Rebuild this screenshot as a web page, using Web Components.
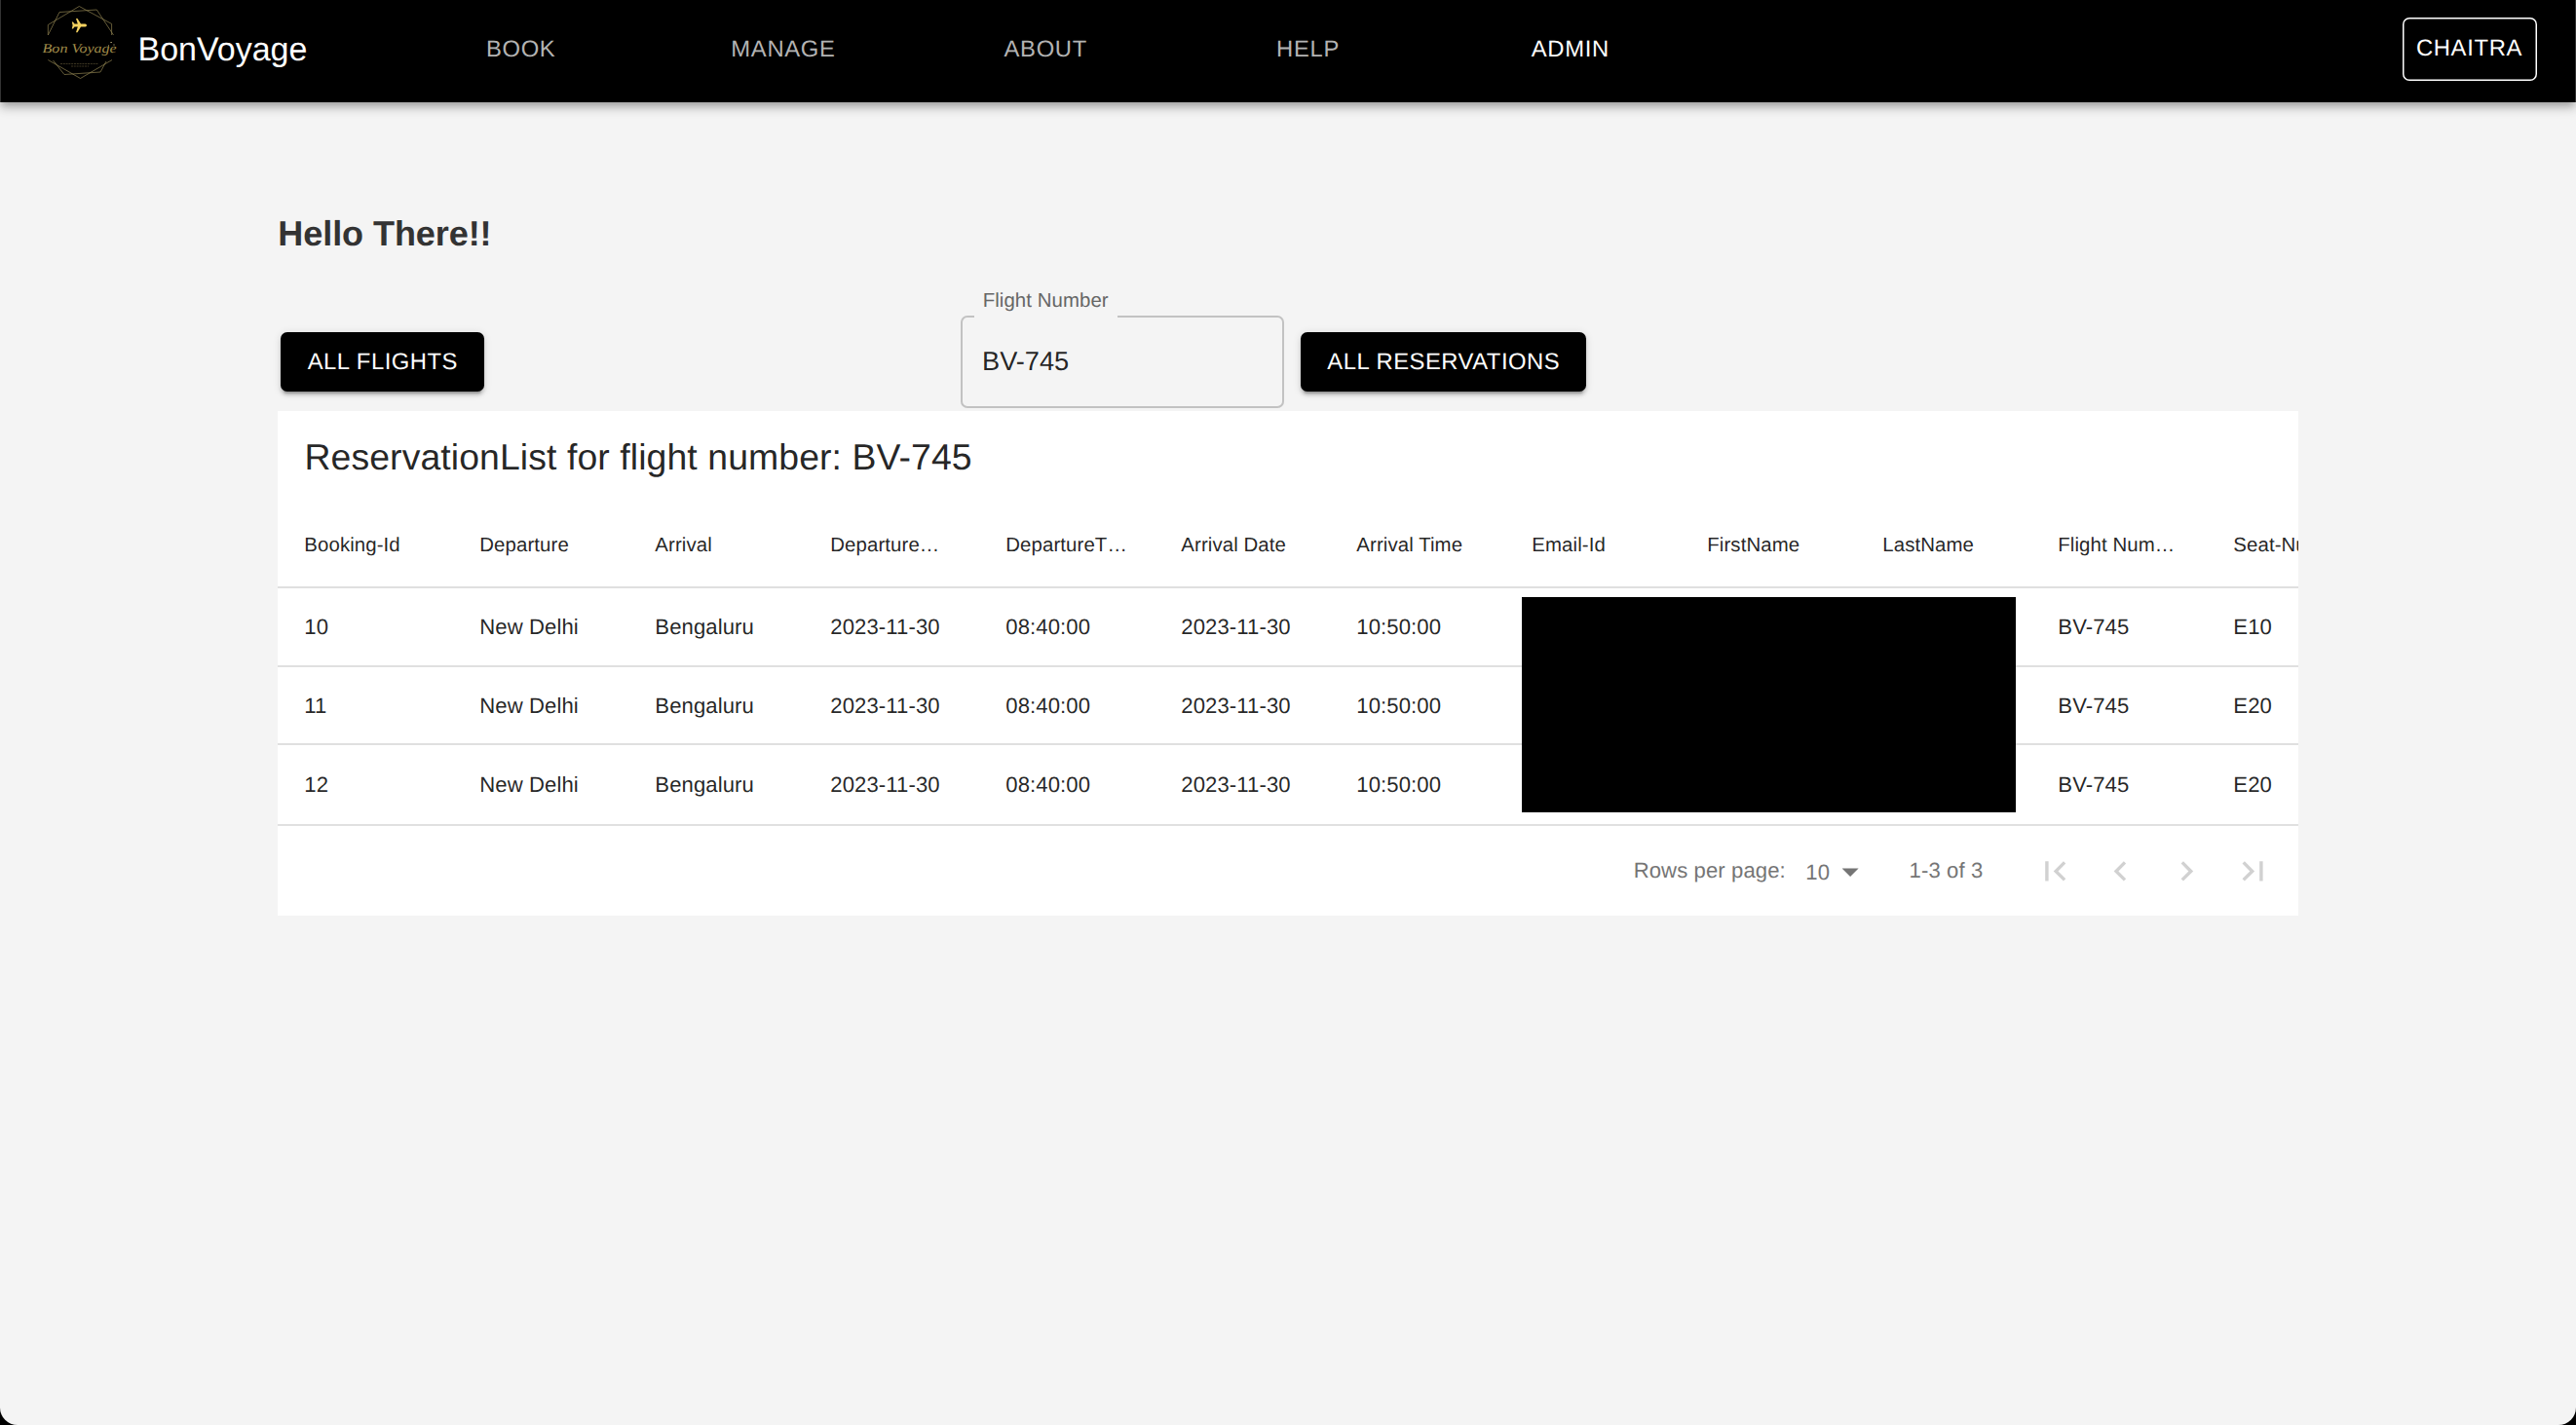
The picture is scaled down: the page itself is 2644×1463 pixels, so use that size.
<!DOCTYPE html>
<html lang="en">
<head>
<meta charset="utf-8">
<title>BonVoyage</title>
<style>
html,body{margin:0;padding:0;background:#000;height:100%;overflow:hidden}
body{font-family:"Liberation Sans",Arial,sans-serif;color:rgba(0,0,0,.87);text-rendering:geometricPrecision}
</style>
</head>
<body>
<bv-app></bv-app>
<script>
function define(name, css, html, setup) {
  customElements.define(name, class extends HTMLElement {
    constructor() {
      super();
      const root = this.attachShadow({mode: 'open'});
      root.innerHTML = '<style>*{box-sizing:border-box}' + css + '</style>' + html;
    }
    connectedCallback() { if (setup) setup(this, this.shadowRoot); }
  });
}

define('bv-logo', `:host{display:block;width:92px;height:88px;flex:none}svg{display:block}`, `
<svg width="92" height="88" viewBox="36 0 92 88" fill="none" stroke="#8f8250" stroke-width=".7">
  <path d="M49.3 36V25.500L81.300 6.500 114.600 24.500V36M49.300 36L61 12.500 99.300 10 116.500 36M49.300 61.500L82.500 80.500 115 61.500M54.500 62L66 76.500 103 74 109 63"/>
  <path fill="#f5d260" stroke="none" d="M89 26c0-1-1-1.500-2.500-1.500H83l-3.500-5.500h-1.500l1.800 5.500h-3.300L75 22.500h-1.200l.8 3.500-.8 3.500H75l1.500-2h3.300L78 33.300h1.500L83 27.500h3.500C88 27.500 89 27 89 26z"/>
  <g fill="#a08c4a" stroke="none" font-family="Liberation Serif,serif" font-style="italic" font-size="13.500">
    <text x="43.500" y="53.500" textLength="26" lengthAdjust="spacingAndGlyphs">Bon</text>
    <text x="73.500" y="53.500" textLength="46" lengthAdjust="spacingAndGlyphs">Voyage</text>
  </g>
  <path stroke="#3c3622" stroke-width="1" stroke-dasharray="2 .8" d="M62 65.500H101M73 68H91"/>
  <path stroke="#d8c890" stroke-width="1.200" d="M113.500 43.500h1.200M111 47h1M116.500 46h1"/>
</svg>`);

define('bv-nav-item', `:host{display:flex;justify-content:center;width:269.3px;font-size:23.8px;line-height:28px;letter-spacing:.68px;color:#b3b3b3}:host([active]){color:#fff}`, `<slot></slot>`);

define('bv-header', `
:host{display:flex;align-items:flex-start;height:104.5px;background:#000;border-left:1px solid #333;border-right:1px solid #333;box-shadow:0 3.4px 6.8px -1.7px rgba(0,0,0,.2),0 6.8px 8.5px rgba(0,0,0,.14),0 1.7px 17px rgba(0,0,0,.12);padding-left:35px;padding-right:39.5px}
.brand{font-size:34px;line-height:40px;color:#fff;margin:30.500px 0 0 13.500px;width:258.5px}
nav{display:flex;margin-top:37px}
.user{margin-left:auto;margin-top:18px;width:138px;height:64.5px;box-shadow:inset 0 0 0 1.500px #fff;border-radius:7px;color:#fff;font-size:23.8px;letter-spacing:.68px;display:flex;align-items:center;justify-content:center}
`, `<bv-logo></bv-logo><div class="brand">BonVoyage</div>
<nav><bv-nav-item>BOOK</bv-nav-item><bv-nav-item>MANAGE</bv-nav-item><bv-nav-item>ABOUT</bv-nav-item><bv-nav-item>HELP</bv-nav-item><bv-nav-item active>ADMIN</bv-nav-item></nav>
<div class="user">CHAITRA</div>`);

define('bv-button', `:host{display:flex;align-items:center;justify-content:center;flex:none;height:61.2px;padding-top:1px;box-sizing:border-box;background:#000;color:#fff;border-radius:6.8px;font-size:23.8px;letter-spacing:.52px;box-shadow:0 5px 1.700px -3.4px rgba(0,0,0,.2),0 3.4px 3.4px rgba(0,0,0,.14),0 1.7px 8.5px rgba(0,0,0,.12)}`, `<slot></slot>`);

define('bv-field', `
:host{display:block;width:332.7px;flex:none}
fieldset{margin:0;height:105px;padding:0 0 0 12.600px;border:2px solid #c2c2c2;border-radius:6.8px;min-width:0}
legend{height:23px;padding:0 8.5px;line-height:23px;font-size:20.4px;color:#666;width:146.700px;white-space:nowrap;letter-spacing:.08px}
.label{display:block;margin-top:-16px}
.v{padding-left:7.900px;font-size:27.2px;line-height:32px;margin-top:18.500px}
`, `<fieldset><legend><span class="label"><slot name="label"></slot></span></legend><div class="v"><slot></slot></div></fieldset>`);

define('bv-toolbar', `
:host{display:flex;height:126px;padding-left:3.2px;align-items:flex-start}
.a{width:208.700px;margin-top:45.500px}.f{margin:18px 17px 0 488.400px}.b{width:293px;margin-top:45.500px}
`, `<bv-button class="a">ALL FLIGHTS</bv-button><bv-field class="f"><span slot="label">Flight Number</span>BV-745</bv-field><bv-button class="b">ALL RESERVATIONS</bv-button>`);

define('bv-row', `
:host{display:flex;align-items:center;box-sizing:border-box;border-bottom:2px solid #e0e0e0;font-size:22.1px;letter-spacing:.1px;width:2160px;padding-top:1.500px}
:host([head]){font-size:20.4px}
div{width:180px;padding-left:27px;flex:none;white-space:nowrap}
`, ``, (el, root) => {
  if (root.querySelector('div')) return;
  el.getAttribute('cells').split('|').forEach(t => {
    const d = document.createElement('div'); d.textContent = t; root.append(d);
  });
});

define('bv-icon', `:host{display:flex;width:67.600px;height:68px;align-items:center;justify-content:center}svg{width:40.8px;height:40.8px;fill:#d1d1d1}`,
`<svg viewBox="0 0 24 24"><path/></svg>`, (el, root) => {
  root.querySelector('path').setAttribute('d', {
    first: 'M18.41 16.59L13.82 12l4.590-4.590L17 6l-6 6 6 6zM6 6h2v12H6z',
    prev: 'M15.41 7.41L14 6l-6 6 6 6 1.410-1.410L10.830 12z',
    next: 'M10 6L8.590 7.410 13.170 12l-4.580 4.590L10 18l6-6z',
    last: 'M5.590 7.410L10.180 12l-4.590 4.590L7 18l6-6-6-6zM16 6h2v12h-2z'
  }[el.getAttribute('kind')]);
});

define('bv-pager', `
:host{display:flex;justify-content:flex-end;align-items:center;height:92.500px;padding-right:13px;font-size:22.1px;letter-spacing:.1px;color:#757575}
.n{margin-left:20.500px;padding-top:3px}
.arrow{width:17px;height:8.500px;margin-left:12.500px;margin-top:3px;background:#757575;clip-path:polygon(0 0,100% 0,50% 100%)}
.c{margin-left:52px;margin-right:40px}
`, `<span>Rows per page:</span><span class="n">10</span><span class="arrow"></span><span class="c">1-3 of 3</span>
<bv-icon kind="first"></bv-icon><bv-icon kind="prev"></bv-icon><bv-icon kind="next"></bv-icon><bv-icon kind="last"></bv-icon>`);

define('bv-table', `
:host{display:block;position:relative;background:#fff;height:518.500px;overflow:hidden}
.title{font-size:37.4px;line-height:44px;height:95.500px;padding:25.300px 0 0 27.200px;letter-spacing:.085px}
.h{height:86.500px}.r1{height:81px}.r2{height:80.300px}.r3{height:83px}
.mask{position:absolute;left:1276.500px;top:191px;width:507px;height:221.500px;background:#000}
`, `<div class="title">ReservationList for flight number: BV-745</div>
<bv-row class="h" head cells="Booking-Id|Departure|Arrival|Departure…|DepartureT…|Arrival Date|Arrival Time|Email-Id|FirstName|LastName|Flight Num…|Seat-Nu"></bv-row>
<bv-row class="r1" cells="10|New Delhi|Bengaluru|2023-11-30|08:40:00|2023-11-30|10:50:00||||BV-745|E10"></bv-row>
<bv-row class="r2" cells="11|New Delhi|Bengaluru|2023-11-30|08:40:00|2023-11-30|10:50:00||||BV-745|E20"></bv-row>
<bv-row class="r3" cells="12|New Delhi|Bengaluru|2023-11-30|08:40:00|2023-11-30|10:50:00||||BV-745|E20"></bv-row>
<bv-pager></bv-pager><div class="mask"></div>`);

define('bv-app', `
:host{display:block;height:1463px;background:#f4f4f4;border-radius:0 0 18px 18px;overflow:hidden}
main{padding:113.500px 285.300px 0 285.300px}
h1{margin:0;padding-top:1px;font-size:36px;letter-spacing:-.06px;line-height:42px;height:77.700px;font-weight:700;color:#333}
`, `<bv-header></bv-header><main><h1>Hello There!!</h1><bv-toolbar></bv-toolbar><bv-table></bv-table></main>`);
</script>
</body>
</html>
